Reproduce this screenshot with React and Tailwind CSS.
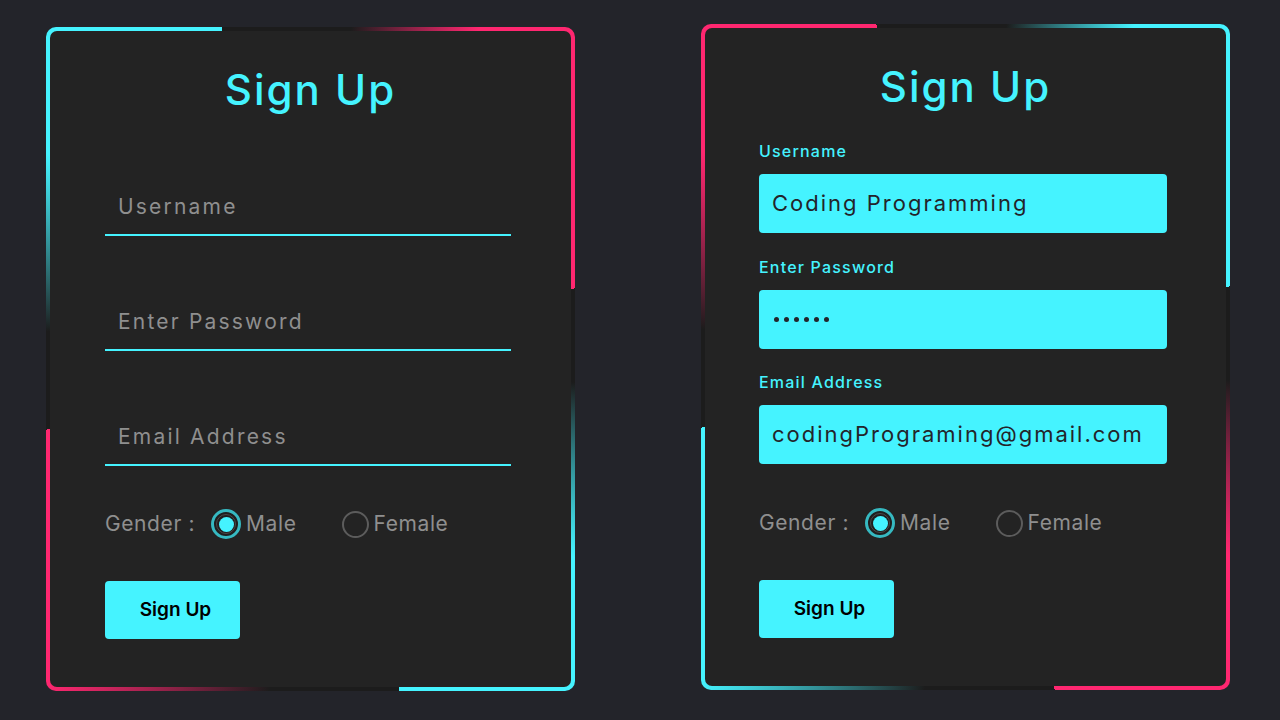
import React from 'react';

const FONT = "font-['Inter','Noto_Sans',sans-serif]";

const borderA =
  'bg-[conic-gradient(#1c1c1c_0deg_7deg,#ff2770_27deg_75deg,#1c1c1c_75deg_95deg,#45f3ff_127deg_165deg,#1c1c1c_165deg_187deg,#ff2770_219deg_255deg,#1c1c1c_255deg_276deg,#45f3ff_308deg_345deg,#1c1c1c_345deg)]';
const borderB =
  'bg-[conic-gradient(#1c1c1c_0deg_7deg,#45f3ff_27deg_75deg,#1c1c1c_75deg_95deg,#ff2770_127deg_165deg,#1c1c1c_165deg_187deg,#45f3ff_219deg_255deg,#1c1c1c_255deg_276deg,#ff2770_308deg_345deg,#1c1c1c_345deg)]';

const Radio = ({ checked, label }) => (
  <label className="flex items-center gap-[5px]">
    {checked ? (
      <span className="w-[30px] h-[30px] rounded-full border-[3px] border-[#36b9c1] flex items-center justify-center bg-[#1f1f1f]">
        <span className="w-[20px] h-[20px] rounded-full border border-[#4a4a4a] flex items-center justify-center">
          <span className="w-[15px] h-[15px] rounded-full bg-[#45f3ff]" />
        </span>
      </span>
    ) : (
      <span className="w-[27px] h-[27px] rounded-full border-2 border-[#5c5c5c]" />
    )}
    <span className="text-[21px] text-[#8f8f8f] tracking-[0.6px]">{label}</span>
  </label>
);

const Gender = () => (
  <div className="flex items-center h-[30px]">
    <span className="text-[21px] text-[#8f8f8f] tracking-[0.6px] w-[106px]">Gender :</span>
    <Radio checked label="Male" />
    <span className="w-[45px]" />
    <Radio label="Female" />
  </div>
);

const SubmitButton = () => (
  <button
    type="button"
    className="w-[135px] h-[58px] bg-[#45f3ff] rounded-[4px] text-black text-[19px] font-semibold pl-[6px]"
  >
    Sign Up
  </button>
);

const LineInput = ({ placeholder }) => (
  <div className="w-[406px] h-[56px] border-b-2 border-[#45f3ff] flex items-center pl-[13px] pb-[1px]">
    <span className="text-[21px] text-[#8f8f8f] tracking-[2.2px]">{placeholder}</span>
  </div>
);

const BoxInput = ({ label, value, dots }) => (
  <div className="flex flex-col">
    <span className="text-[16px] font-medium text-[#45f3ff] tracking-[1.2px] h-[24px] leading-[24px]">{label}</span>
    <div className="mt-[11px] w-[408px] h-[59px] bg-[#45f3ff] rounded-[4px] flex items-center pl-[13px]">
      {dots ? (
        <span className="flex gap-[5px] pl-[2px]">
          {[0, 1, 2, 3, 4, 5].map((i) => (
            <span key={i} className="w-[5px] h-[5px] rounded-full bg-[#23242a]" />
          ))}
        </span>
      ) : (
        <span className="text-[22px] text-[#23242a] tracking-[2px]">{value}</span>
      )}
    </div>
  </div>
);

export default function App() {
  return (
    <div className={`w-[1280px] h-[720px] bg-[#23242a] flex items-start ${FONT}`}>
      {/* carte gauche : champs soulignés */}
      <div className={`ml-[46px] mt-[27px] w-[529px] h-[664px] p-[4px] rounded-[10px] ${borderA}`}>
        <div className="w-full h-full rounded-[7px] bg-[#232323] flex flex-col pl-[55px]">
          <h2 className="mt-[31px] mr-[55px] text-center text-[42px] font-medium text-[#45f3ff] tracking-[2px] leading-[56px]">
            Sign Up
          </h2>
          <div className="mt-[62px] flex flex-col gap-[59px]">
            <LineInput placeholder="Username" />
            <LineInput placeholder="Enter Password" />
            <LineInput placeholder="Email Address" />
          </div>
          <div className="mt-[43px]">
            <Gender />
          </div>
          <div className="mt-[42px]">
            <SubmitButton />
          </div>
        </div>
      </div>

      {/* carte droite : champs remplis */}
      <div className={`ml-[126px] mt-[24px] w-[529px] h-[666px] p-[4px] rounded-[10px] ${borderB}`}>
        <div className="w-full h-full rounded-[7px] bg-[#232323] flex flex-col pl-[54px]">
          <h2 className="mt-[31px] mr-[54px] text-center text-[42px] font-medium text-[#45f3ff] tracking-[2px] leading-[56px]">
            Sign Up
          </h2>
          <div className="mt-[24px] flex flex-col gap-[21.5px]">
            <BoxInput label="Username" value="Coding Programming" />
            <BoxInput label="Enter Password" dots />
            <BoxInput label="Email Address" value="codingPrograming@gmail.com" />
          </div>
          <div className="mt-[44px]">
            <Gender />
          </div>
          <div className="mt-[42px]">
            <SubmitButton />
          </div>
        </div>
      </div>
    </div>
  );
}
